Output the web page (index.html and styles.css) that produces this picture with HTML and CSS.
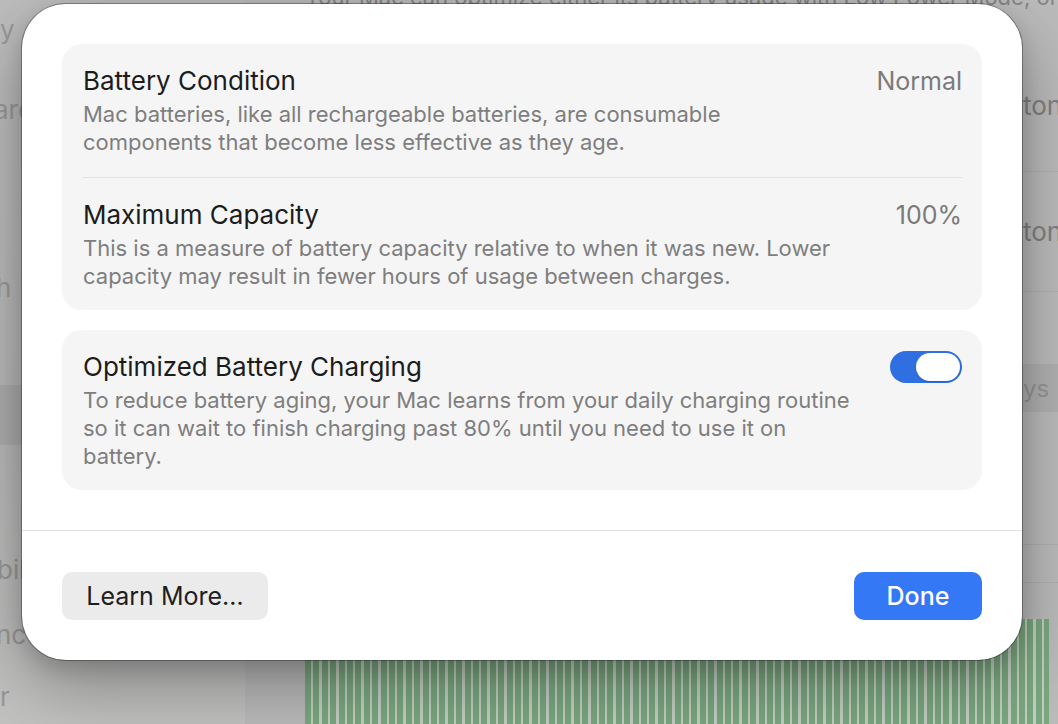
FILE: index.html
```html
<!DOCTYPE html>
<html lang="en">
<head>
<meta charset="utf-8">
<title>Battery Health</title>
<link rel="stylesheet" href="styles.css">
</head>
<body>
<div class="backdrop">
  <aside class="sidebar">
    <div class="side-item s1">y</div>
    <div class="side-item s2">are</div>
    <div class="side-item s3">h</div>
    <div class="side-item s4 selected"></div>
    <div class="side-item s5">bili</div>
    <div class="side-item s6">nc</div>
    <div class="side-item s7">r</div>
  </aside>
  <main class="content">
    <p class="intro">Your Mac can optimize either its battery usage with Low Power Mode, or</p>
    <div class="bg-row r1"><span></span><span class="bg-val">ton</span></div>
    <div class="bg-row r2"><span></span><span class="bg-val">ton</span></div>
    <div class="bg-row r3"></div>
    <div class="bg-row r4 band"><span></span><span class="bg-val">ys</span></div>
    <div class="bg-row r5"></div>
    <div class="bg-row r6"></div>
    <div class="chart"></div>
  </main>
</div>

<div class="dialog">
  <div class="dialog-body">
    <section class="card">
      <div class="item">
        <div class="item-text">
          <h2 class="item-title">Battery Condition</h2>
          <p class="item-desc">Mac batteries, like all rechargeable batteries, are consumable<br>components that become less effective as they age.</p>
        </div>
        <span class="item-value">Normal</span>
      </div>
      <div class="item item-divided">
        <div class="item-text">
          <h2 class="item-title">Maximum Capacity</h2>
          <p class="item-desc">This is a measure of battery capacity relative to when it was new. Lower<br>capacity may result in fewer hours of usage between charges.</p>
        </div>
        <span class="item-value">100%</span>
      </div>
    </section>
    <section class="card">
      <div class="item">
        <div class="item-text">
          <h2 class="item-title">Optimized Battery Charging</h2>
          <p class="item-desc">To reduce battery aging, your Mac learns from your daily charging routine<br>so it can wait to finish charging past 80% until you need to use it on<br>battery.</p>
        </div>
        <div class="toggle" role="switch" aria-checked="true"><span class="knob"></span></div>
      </div>
    </section>
  </div>
  <footer class="dialog-footer">
    <button class="btn">Learn More…</button>
    <button class="btn btn-primary">Done</button>
  </footer>
</div>
</body>
</html>
```

FILE: styles.css
```css
* { box-sizing: border-box; }

html, body {
  margin: 0;
  padding: 0;
}

body {
  width: 1058px;
  height: 724px;
  overflow: hidden;
  position: relative;
  font-family: Inter, "Noto Sans", "Liberation Sans", sans-serif;
  background: #bcbcbc;
}

/* ---------- dimmed window behind the sheet ---------- */
.backdrop {
  display: flex;
  width: 1058px;
  height: 724px;
  overflow: hidden;
}

.sidebar {
  width: 245px;
  flex: none;
  display: flex;
  flex-direction: column;
  background: linear-gradient(180deg, #bdbdbd 0%, #b9b9b9 60%, #c2c3c1 100%);
  color: #999999;
  font-size: 26px;
}

.side-item {
  height: 32px;
  line-height: 32px;
  white-space: nowrap;
}
.s1 { margin-top: 14px; }
.s2 { margin-top: 48px; text-indent: -6px; }
.s3 { margin-top: 146px; text-indent: -4px; }
.s4 { margin-top: 81px; height: 60px; }
.selected { background: #aeaeae; }
.s5 { margin-top: 109px; text-indent: -3px; }
.s6 { margin-top: 33px; text-indent: -4px; }
.s7 { margin-top: 30px; }

.content {
  flex: 1;
  display: flex;
  flex-direction: column;
  background: #bbbbbb;
  color: #808080;
  font-size: 26px;
}

.intro {
  margin: -17px 0 0 60px;
  height: 28px;
  line-height: 28px;
  font-size: 22px;
  white-space: nowrap;
  color: #858585;
}

.bg-row {
  display: grid;
  grid-template-columns: 778px 1fr;
  align-items: center;
  border-bottom: 1px solid #b0b0b0;
  white-space: nowrap;
}
.r1 { margin-top: 29px; height: 132px; }
.r2 { height: 120px; }
.r3 { height: 73px; }
.r4 { height: 47px; }
.band { background: #b1b1b1; font-size: 24px; color: #959595; }
.r5 { height: 133px; }
.r6 { height: 38px; }

.chart {
  margin: 36px 13px 0 60px;
  flex: 1;
  background:
    repeating-linear-gradient(90deg, #7ba87f 0 6px, #c4cfc3 6px 8.4px);
}

/* ---------- sheet ---------- */
.dialog {
  position: absolute;
  left: 22px;
  top: 4px;
  width: 1000px;
  height: 656px;
  background: #ffffff;
  border-radius: 44px;
  box-shadow:
    0 0 0 1px rgba(0, 0, 0, 0.3),
    0 26px 70px rgba(0, 0, 0, 0.32),
    0 8px 20px rgba(0, 0, 0, 0.14);
  display: flex;
  flex-direction: column;
  overflow: hidden;
}

.dialog-body {
  padding: 40px 40px 40px;
  display: flex;
  flex-direction: column;
  gap: 20px;
  border-bottom: 1px solid #e2e2e2;
}

.card {
  background: #f5f5f5;
  border-radius: 20px;
  padding: 0 20px;
}

.item {
  display: flex;
  align-items: flex-start;
  gap: 24px;
  padding: 22px 0 20px 1px;
}

.item-divided {
  border-top: 1px solid #e3e3e3;
}

.item:first-child:not(:only-child) {
  padding-bottom: 21px;
}

.item-text {
  flex: 1;
  min-width: 0;
}

.item-title {
  margin: 0;
  font-size: 26px;
  line-height: 30px;
  font-weight: 400;
  color: #1c1c1c;
  white-space: nowrap;
}

.item-desc {
  margin: 4px 0 0;
  font-size: 22px;
  line-height: 28px;
  color: #7e7e7e;
  white-space: nowrap;
}

.item-value {
  font-size: 25px;
  line-height: 30px;
  color: #7a7a7a;
  white-space: nowrap;
}

.toggle {
  width: 72px;
  height: 32px;
  margin-top: -1px;
  border-radius: 16px;
  background: #2f6fe2;
  padding: 2px;
  display: flex;
  justify-content: flex-end;
  flex: none;
}

.knob {
  width: 44px;
  height: 28px;
  border-radius: 14px;
  background: #ffffff;
  box-shadow: 0 1px 2px rgba(0, 0, 0, 0.15);
}

.dialog-footer {
  flex: 1;
  display: flex;
  justify-content: space-between;
  align-items: flex-start;
  padding: 41px 40px 0;
}

.btn {
  height: 48px;
  border: none;
  border-radius: 10px;
  background: #ebebeb;
  color: #1e1e1e;
  font-family: inherit;
  font-size: 25px;
  padding: 0 20px;
  width: 206px;
}

.btn-primary {
  width: 128px;
  background: #3478f6;
  color: #ffffff;
  font-weight: 500;
}
```
